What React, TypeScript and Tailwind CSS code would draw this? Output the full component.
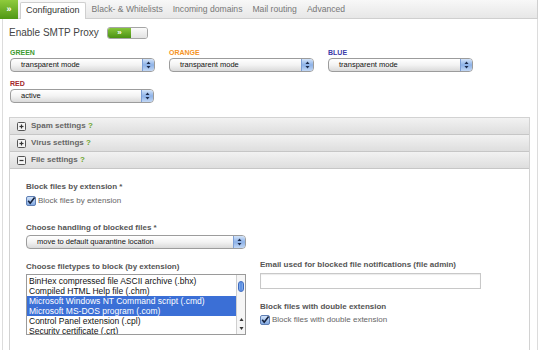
import React from 'react';

const font = "font-['Liberation_Sans',Arial,sans-serif]";

function Chevrons({ className }: { className?: string }) {
  return <span className={`font-bold leading-none text-white ${className ?? ''}`}>»</span>;
}

function MacSelect({ value, className }: { value: string; className?: string }) {
  return (
    <div
      className={`flex h-[14px] items-center overflow-hidden rounded-[4px] border border-[#9c9c9c] bg-gradient-to-b from-white via-[#f3f3f3] to-[#dadada] ${className ?? ''}`}
    >
      <span className="flex-1 truncate pl-[10px] text-[7.5px] leading-none text-[#111]">{value}</span>
      <span className="flex h-full w-[12px] items-center justify-center border-l border-[#7d9fd6] bg-gradient-to-b from-[#d3e3f8] via-[#8db2e8] to-[#c2d7f4]">
        <svg width="5" height="8" viewBox="0 0 5 8">
          <path d="M2.5 0.5 L4.5 3 H0.5 Z" fill="#1b2b4d" />
          <path d="M2.5 7.5 L4.5 5 H0.5 Z" fill="#1b2b4d" />
        </svg>
      </span>
    </div>
  );
}

function MacCheck({ label }: { label: string }) {
  return (
    <div className="flex h-[11px] items-center gap-[2px]">
      <svg width="10" height="10" viewBox="0 0 10 10">
        <defs>
          <linearGradient id="cb" x1="0" y1="0" x2="0" y2="1">
            <stop offset="0" stopColor="#d6e6fa" />
            <stop offset="1" stopColor="#7ea6e0" />
          </linearGradient>
        </defs>
        <rect x="0.5" y="0.5" width="9" height="9" rx="1.5" fill="url(#cb)" stroke="#5f7fb4" />
        <path d="M2.2 4.8 L4.2 7.2 L8.6 1.6" fill="none" stroke="#14213d" strokeWidth="1.6" />
      </svg>
      <span className="text-[8px] leading-none text-[#666]">{label}</span>
    </div>
  );
}

function PanelIcon({ open }: { open?: boolean }) {
  return (
    <svg width="9" height="9" viewBox="0 0 9 9">
      <rect x="0.5" y="0.5" width="8" height="8" rx="1" fill="#f4f4f4" stroke="#555" />
      <path d="M2.5 4.5 H6.5" stroke="#333" strokeWidth="1.2" />
      {!open && <path d="M4.5 2.5 V6.5" stroke="#333" strokeWidth="1.2" />}
    </svg>
  );
}

function PanelHeader({ title, open }: { title: string; open?: boolean }) {
  return (
    <div className="flex h-[17px] items-center gap-[5px] border-b border-[#c6c6c6] bg-gradient-to-b from-[#f2f2f2] to-[#dedede] pl-[7px]">
      <PanelIcon open={open} />
      <span className="text-[8px] font-bold leading-none text-[#666]">
        {title} <span className="text-[#6aa52a]">?</span>
      </span>
    </div>
  );
}

const colors = [
  { name: 'GREEN', color: 'text-[#3e9b2f]', value: 'transparent mode' },
  { name: 'ORANGE', color: 'text-[#f5941f]', value: 'transparent mode' },
  { name: 'BLUE', color: 'text-[#3a3aa8]', value: 'transparent mode' },
];

const filetypes = [
  { label: 'BinHex compressed file ASCII archive (.bhx)', selected: false },
  { label: 'Compiled HTML Help file (.chm)', selected: false },
  { label: 'Microsoft Windows NT Command script (.cmd)', selected: true },
  { label: 'Microsoft MS-DOS program (.com)', selected: true },
  { label: 'Control Panel extension (.cpl)', selected: false },
  { label: 'Security certificate (.crt)', selected: false },
];

export default function App() {
  return (
    <div className={`h-[350px] w-[540px] overflow-hidden bg-white ${font}`}>
      <div className="w-[538px]">
        {/* tabs */}
        <div className="flex h-[19px] items-end border-b border-r border-[#cfcfcf] bg-gradient-to-b from-[#f8f8f8] to-[#e7e7e7]">
          <div className="flex h-[19px] w-[18px] items-center justify-center self-start bg-gradient-to-b from-[#8fcb3c] to-[#4f9813]">
            <Chevrons className="text-[9px]" />
          </div>
          <div className="relative top-px ml-[2px] flex h-[17px] items-center rounded-t-[2px] border border-b-0 border-[#cfcfcf] bg-white px-[5px] text-[9px] text-[#333]">
            Configuration
          </div>
          <div className="flex pl-[1px]">
            {['Black- & Whitelists', 'Incoming domains', 'Mail routing', 'Advanced'].map((t) => (
              <div key={t} className="flex h-[17px] items-center px-[5px] text-[8.6px] text-[#777]">
                {t}
              </div>
            ))}
          </div>
        </div>

        {/* body */}
        <div className="ml-[2px] h-[331px] border-l border-r border-[#dcdcdc] pl-[6px] pr-[7px]">
          <div className="flex h-[14px] items-center gap-[8px] pt-[14px] pb-[15px]">
            <span className="text-[10px] leading-none text-[#444]">Enable SMTP Proxy</span>
            <div className="flex h-[12px] w-[41px] overflow-hidden rounded-[3px] border border-[#a5a5a5]">
              <div className="flex w-[23px] items-center justify-center bg-gradient-to-b from-[#86c53a] to-[#4a9212]">
                <Chevrons className="text-[8px]" />
              </div>
              <div className="flex-1 bg-gradient-to-b from-[#fbfbfb] to-[#e2e2e2]" />
            </div>
          </div>

          <div className="grid grid-cols-[145px_145px_145px] gap-x-[14px] pl-[1px]">
            {colors.map((c) => (
              <div key={c.name} className="flex flex-col gap-[1px]">
                <span className={`text-[7px] font-bold leading-[9px] ${c.color}`}>{c.name}</span>
                <MacSelect value={c.value} />
              </div>
            ))}
          </div>
          <div className="mt-[7px] flex w-[145px] flex-col gap-[1px] pl-[1px]">
            <span className="text-[7px] font-bold leading-[9px] text-[#a3262a]">RED</span>
            <MacSelect value="active" />
          </div>

          {/* panels */}
          <div className="mt-[14px] border-x border-t border-[#d2d2d2]">
            <PanelHeader title="Spam settings" />
            <PanelHeader title="Virus settings" />
            <PanelHeader title="File settings" open />
            <div className="h-[190px] pl-[16px] pt-[13px]">
              <div className="text-[8px] font-bold leading-[10px] text-[#555]">Block files by extension *</div>
              <div className="mt-[3px]">
                <MacCheck label="Block files by extension" />
              </div>

              <div className="mt-[17px] text-[8px] font-bold leading-[10px] text-[#555]">
                Choose handling of blocked files *
              </div>
              <MacSelect value="move to default quarantine location" className="mt-[2px] w-[220px]" />

              <div className="mt-[11px] grid grid-cols-[220px_221px] gap-x-[14px]">
                <div className="pt-[2px]">
                  <div className="text-[8px] font-bold leading-[10px] text-[#555]">
                    Choose filetypes to block (by extension)
                  </div>
                  <div className="mt-[2px] flex h-[61px] overflow-hidden border border-[#9a9a9a]">
                    <div className="flex-1 pt-[1px]">
                      {filetypes.map((f) => (
                        <div
                          key={f.label}
                          className={`flex h-[10px] items-center pl-[2px] text-[8.5px] leading-none ${
                            f.selected ? 'bg-[#3b6fd6] text-white' : 'text-[#111]'
                          }`}
                        >
                          {f.label}
                        </div>
                      ))}
                    </div>
                    <div className="flex w-[9px] flex-col items-center border-l border-[#cfcfcf] bg-[#f6f6f6] pt-[6px]">
                      <div className="h-[11px] w-[6px] rounded-full border border-[#3c6ac0] bg-gradient-to-r from-[#8fb5ee] via-[#4f86df] to-[#8fb5ee]" />
                      <div className="flex-1" />
                      <svg width="5" height="14" viewBox="0 0 5 14" className="mb-[3px]">
                        <path d="M2.5 1 L4.5 4 H0.5 Z" fill="#333" />
                        <path d="M2.5 13 L4.5 10 H0.5 Z" fill="#333" />
                      </svg>
                    </div>
                  </div>
                </div>
                <div>
                  <div className="text-[8px] font-bold leading-[10px] text-[#555]">
                    Email used for blocked file notifications (file admin)
                  </div>
                  <div className="mt-[3px] h-[16px] border border-[#c8c8c8] bg-white shadow-[inset_0_1px_1px_rgba(0,0,0,0.08)]" />
                  <div className="mt-[13px] text-[8px] font-bold leading-[10px] text-[#555]">
                    Block files with double extension
                  </div>
                  <div className="mt-[2px]">
                    <MacCheck label="Block files with double extension" />
                  </div>
                </div>
              </div>
            </div>
          </div>
        </div>
      </div>
    </div>
  );
}
